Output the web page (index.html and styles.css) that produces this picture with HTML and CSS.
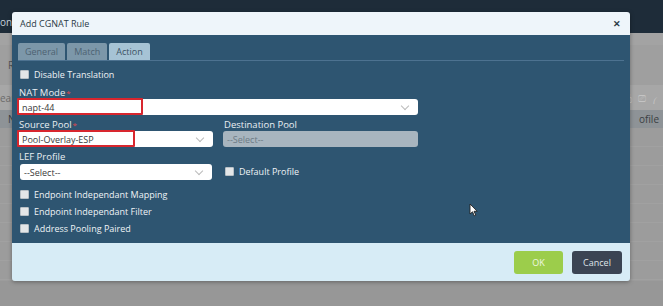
FILE: index.html
```html
<!DOCTYPE html>
<html lang="en">
<head>
  <meta charset="UTF-8">
  <title>Add CGNAT Rule</title>
  <link rel="stylesheet" href="styles.css">
</head>
<body>
  <div class="page">
    <div class="topbar"><span class="crumb">on</span></div>
    <div class="strip"></div>
    <div class="bg-row bg-r"><span>R</span></div>
    <div class="bg-row bg-search"><span>ear</span><span class="icons">&#9113; &#9114; &#9115;</span></div>
    <div class="bg-row bg-head"><span>N</span><span class="right">ofile</span></div>
    <div class="bg-rest"></div>
    <div class="bg-foot"></div>

    <div class="modal">
      <div class="modal-head">
        <span class="title">Add CGNAT Rule</span>
        <span class="close">&#x2715;</span>
      </div>
      <div class="modal-body">
        <div class="tabs">
          <span class="tab">General</span>
          <span class="tab">Match</span>
          <span class="tab active">Action</span>
        </div>

        <label class="check first"><span class="box"></span>Disable Translation</label>

        <div class="label">NAT Mode<span class="req">*</span></div>
        <div class="field wide">
          <span class="val">napt-44</span><span class="chev"></span>
          <span class="mark mark-nat"></span>
        </div>

        <div class="pair">
          <div class="col">
            <div class="label">Source Pool<span class="req">*</span></div>
            <div class="field">
              <span class="val">Pool-Overlay-ESP</span><span class="chev"></span>
              <span class="mark mark-src"></span>
            </div>
          </div>
          <div class="col">
            <div class="label">Destination Pool</div>
            <div class="field disabled"><span class="val">--Select--</span></div>
          </div>
        </div>

        <div class="label">LEF Profile</div>
        <div class="pair lef">
          <div class="field"><span class="val">--Select--</span><span class="chev"></span></div>
          <label class="check inline"><span class="box"></span>Default Profile</label>
        </div>

        <label class="check"><span class="box"></span>Endpoint Independant Mapping</label>
        <label class="check"><span class="box"></span>Endpoint Independant Filter</label>
        <label class="check"><span class="box"></span>Address Pooling Paired</label>

        <svg class="cursor" width="9" height="14" viewBox="0 0 9 14">
          <path d="M1 1 L1 11 L3.5 8.8 L5.3 12.8 L6.8 12.1 L5 8.3 L8.2 8.3 Z" fill="#fff" stroke="#222" stroke-width="0.9"/>
        </svg>
      </div>
      <div class="modal-foot">
        <button class="btn ok">OK</button>
        <button class="btn cancel">Cancel</button>
      </div>
    </div>
  </div>
</body>
</html>
```

FILE: styles.css
```css
body {
  margin: 0;
  font-family: "Open Sans", "Noto Sans", sans-serif;
  background: #9b9b9b;
}
.page {
  position: relative;
  width: 663px;
  height: 306px;
  overflow: hidden;
}
.topbar {
  height: 33px;
  background: #1e2c39;
  color: #c8d2da;
  font-size: 10px;
}
.crumb {
  display: block;
  padding: 15px 0 0 0;
}
.strip {
  height: 12px;
  background: #a3a3a3;
}
.bg-row {
  display: flex;
  justify-content: space-between;
  align-items: center;
  color: #555;
  font-size: 10px;
  padding: 0 4px 0 8px;
}
.bg-r {
  height: 40px;
  background: #9f9f9f;
}
.bg-search {
  height: 25px;
  background: #a7a7a7;
  padding-left: 0;
  color: #6b6b6b;
}
.icons {
  color: #c4c4c4;
  letter-spacing: 2px;
}
.bg-head {
  height: 18px;
  background: #8e9397;
  color: #3b3f43;
}
.right {
  color: #3b3f43;
}
.bg-rest {
  height: 153px;
  background: repeating-linear-gradient(#9c9c9c 0 18px, #a1a1a1 18px 19px);
}
.bg-foot {
  height: 25px;
  background: #979797;
}

.modal {
  position: absolute;
  left: 12px;
  top: 12px;
  width: 618px;
  box-shadow: 0 1px 4px rgba(0,0,0,0.35);
  border-radius: 3px;
  overflow: hidden;
}
.modal-head {
  height: 23px;
  background: #eef5fa;
  display: flex;
  align-items: center;
  justify-content: space-between;
  padding: 0 9px 0 8px;
  color: #2b3a46;
  font-size: 9px;
}
.close {
  font-size: 9px;
  font-weight: bold;
  color: #2b3a46;
}
.modal-body {
  position: relative;
  height: 208px;
  box-sizing: border-box;
  background: #2e5571;
  padding: 8px 0 0 6px;
  color: #e9eff3;
  font-size: 9px;
}
.tabs {
  display: flex;
  gap: 2px;
  height: 17px;
  border-bottom: 1px solid #4d7290;
  margin-right: 6px;
}
.tab {
  display: flex;
  align-items: center;
  padding: 0 7px;
  background: #7c97a9;
  color: #4d6272;
  border-radius: 2px 2px 0 0;
}
.tab.active {
  background: #a6c3d5;
  color: #3c5263;
}
.check {
  display: flex;
  align-items: center;
  height: 17px;
  padding-left: 2px;
  color: #eef3f6;
}
.check.first {
  margin-top: 5px;
}
.box {
  width: 7px;
  height: 7px;
  background: #e3e6e8;
  border: 1px solid #b8c0c6;
  margin-right: 5px;
  border-radius: 1px;
}
.label {
  height: 13px;
  line-height: 13px;
  margin-top: 3px;
  margin-left: 1px;
  font-size: 9.5px;
}
.req {
  color: #e0474c;
  font-size: 8px;
  vertical-align: top;
  margin-left: 1px;
}
.field {
  position: relative;
  display: flex;
  align-items: center;
  justify-content: space-between;
  box-sizing: border-box;
  height: 16px;
  background: #fff;
  border-radius: 3px;
  padding: 0 10px 0 4px;
  color: #3a3a3a;
  font-size: 9px;
}
.field.wide {
  width: 400px;
}
.chev {
  width: 5px;
  height: 5px;
  border-right: 1px solid #bbb;
  border-bottom: 1px solid #bbb;
  transform: rotate(45deg);
  margin-top: -3px;
}
.field.disabled {
  background: #a8b5bf;
  color: #6d7b86;
}
.mark {
  position: absolute;
  border: 2px solid #d8262e;
  border-radius: 1px;
}
.mark-nat {
  left: -1px;
  top: -1px;
  width: 122px;
  height: 13px;
}
.mark-src {
  left: -1px;
  top: -1px;
  width: 114px;
  height: 13px;
}
.pair {
  display: flex;
  gap: 10px;
  width: 400px;
}
.col {
  flex: 1;
}
.lef {
  margin-top: 1px;
  margin-left: 2px;
  gap: 11px;
  margin-bottom: 6px;
}
.lef .field {
  width: 192px;
}
.check.inline {
  height: 16px;
  margin-top: -1px;
}
.cursor {
  position: absolute;
  left: 457px;
  top: 168px;
}
.modal-foot {
  height: 38px;
  background: #d7ecf6;
  display: flex;
  justify-content: flex-end;
  align-items: center;
  gap: 9px;
  padding-right: 8px;
}
.btn {
  height: 23px;
  border: none;
  border-radius: 3px;
  font-family: "Open Sans", "Noto Sans", sans-serif;
  font-size: 9px;
  color: #fff;
  padding: 0;
}
.ok {
  width: 49px;
  background: #9ccd4b;
  color: #eef7e0;
}
.cancel {
  width: 50px;
  background: #3b4453;
  color: #dfe3e8;
}
```
